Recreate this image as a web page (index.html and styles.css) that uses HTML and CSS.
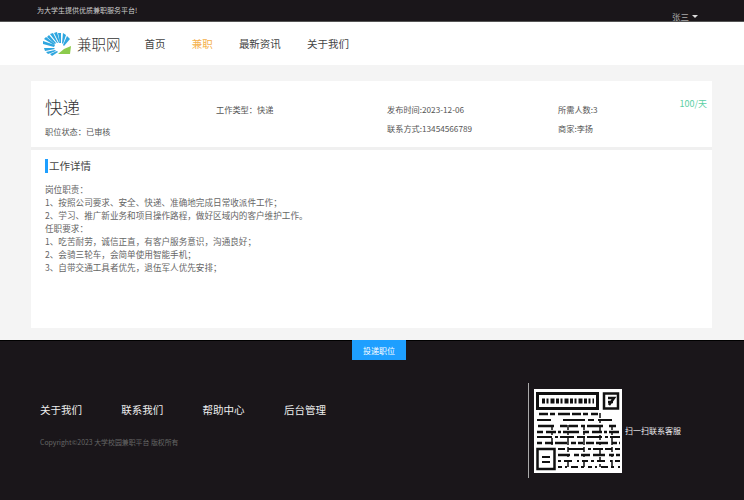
FILE: index.html
```html
<!DOCTYPE html>
<html lang="zh-CN">
<head>
  <meta charset="UTF-8">
  <meta name="viewport" content="width=device-width, initial-scale=1.0">
  <title>职位详情</title>
  <link rel="stylesheet" href="styles.css">
</head>
<body>
  <div class="topbar">
    <span class="slogan">为大学生提供优质兼职服务平台!</span>
    <span class="user">张三<i class="caret"></i></span>
  </div>
  <header class="nav">
    <svg class="logo-icon" width="28" height="24" viewBox="0 0 28 24">
      <g fill="#2fa6df">
        <polygon points="12,13 0,9 0,12 11,15"/>
        <polygon points="11,16 1,16 2,19 12,17"/>
        <polygon points="12,18 3,20 5,22 13,19"/>
        <polygon points="14,19 7,22 9,24 15,20"/>
        <polygon points="12,12 3,5 1,7 11,13"/>
        <polygon points="13,11 6,3 4,5 12,12"/>
        <polygon points="15,11 10,1 7,2 14,11"/>
        <polygon points="17,11 14,0 11,1 16,11"/>
        <polygon points="18,11 18,1 15,1 17,11"/>
        <polygon points="20,12 23,3 20,1 19,11"/>
        <polygon points="21,14 27,7 24,4 20,13"/>
      </g>
      <polygon points="15,22 27,22 28,14 21,17" fill="#8ccb4c"/>
    </svg>
    <span class="logo-text">兼职网</span>
    <nav class="menu">
      <a>首页</a>
      <a class="active">兼职</a>
      <a>最新资讯</a>
      <a>关于我们</a>
    </nav>
  </header>
  <main class="main">
    <div class="card">
      <section class="job-head">
        <div class="col col-title">
          <h1>快递</h1>
          <p>职位状态：已审核</p>
        </div>
        <div class="col">
          <p>工作类型：快递</p>
        </div>
        <div class="col">
          <p>发布时间:2023-12-06</p>
          <p>联系方式:13454566789</p>
        </div>
        <div class="col col-last">
          <p>所需人数:3</p>
          <p>商家:李扬</p>
        </div>
        <div class="price">100/天</div>
      </section>
      <section class="job-detail">
        <h2>工作详情</h2>
        <div class="detail-text">
          <p>岗位职责：</p>
          <p>1、按照公司要求、安全、快递、准确地完成日常收派件工作；</p>
          <p>2、学习、推广新业务和项目操作路程，做好区域内的客户维护工作。</p>
          <p>任职要求：</p>
          <p>1、吃苦耐劳，诚信正直，有客户服务意识，沟通良好；</p>
          <p>2、会骑三轮车，会简单使用智能手机；</p>
          <p>3、自带交通工具者优先，退伍军人优先安排；</p>
        </div>
      </section>
    </div>
  </main>
  <footer class="footer">
    <button class="apply">投递职位</button>
    <div class="footer-body">
      <div class="footer-left">
        <div class="footer-links">
          <a>关于我们</a>
          <a>联系我们</a>
          <a>帮助中心</a>
          <a>后台管理</a>
        </div>
        <p class="copyright">Copyright©2023 大学校园兼职平台 版权所有</p>
      </div>
      <div class="footer-right">
        <svg class="qr" width="88" height="84" viewBox="0 0 88 84">
          <rect width="88" height="84" fill="#fff"/>
          <g fill="none" stroke="#111">
            <rect x="3.500" y="4.500" width="60" height="15" stroke-width="3"/>
            <rect x="70" y="4.500" width="14" height="15" stroke-width="2.500"/>
            <rect x="3.500" y="60" width="17" height="20" stroke-width="2.500"/>
            <path stroke-width="5" stroke-dasharray="3 1.500 2 2 4 1.500" d="M8 12 H60"/>
            <path stroke-width="2.500" d="M74 9 H80 L75 16 M74 13 H79"/>
            <path stroke-width="2" d="M8 68 H16 M8 73 H16"/>
            <path stroke-width="2.500" stroke-dasharray="9 2 5 3 12 2" d="M5 25 H64"/>
            <path stroke-width="2" stroke-dasharray="14 12 22 3 6 4" d="M3 31 H84"/>
            <path stroke-width="2.500" stroke-dasharray="16 6 7 2 9 3 4 2" d="M4 37 H84"/>
            <path stroke-width="2.500" stroke-dasharray="6 3 10 2 3 2 16 4" d="M3 43 H85"/>
            <path stroke-width="2" stroke-dasharray="15 3 3 2 14 3 8 2" d="M3 48 H86"/>
            <path stroke-width="2.500" stroke-dasharray="5 3 8 2 12 4 5 2" d="M3 54 H86"/>
            <path stroke-width="2" stroke-dasharray="7 3 16 4 3 2 10 2" d="M24 60 H86"/>
            <path stroke-width="2.500" stroke-dasharray="12 4 5 2 9 3" d="M24 66 H86"/>
            <path stroke-width="2" stroke-dasharray="3 3 8 5 2 3 6 3" d="M24 72 H86"/>
            <path stroke-width="2" stroke-dasharray="4 3 2 4 7 3 3 4" d="M24 78 H86"/>
            <path stroke-width="1.500" stroke-dasharray="5 2 3 3 7 2" d="M18 36 V58 M34 36 V80 M50 36 V80 M66 24 V80 M78 36 V80"/>
          </g>
        </svg>
        <span class="qr-text">扫一扫联系客服</span>
      </div>
    </div>
  </footer>
</body>
</html>
```

FILE: styles.css
```css
* {
  margin: 0;
  padding: 0;
  box-sizing: border-box;
}
body {
  font-family: "Noto Sans CJK SC", "Noto Sans", sans-serif;
  background-color: #f4f4f4;
  color: #555;
}
.topbar {
  height: 22px;
  background-color: #1a161a;
  border-bottom: 1px solid #555;
  padding: 0 46px 0 37px;
  display: flex;
  justify-content: space-between;
  color: #ccc;
}
.slogan {
  font-size: 7px;
  line-height: 21px;
}
.user {
  font-size: 8.5px;
  line-height: 12px;
  padding-top: 10px;
  color: #aaa;
}
.caret {
  display: inline-block;
  margin-left: 3px;
  vertical-align: 2px;
  border: 3px solid transparent;
  border-top: 3px solid #ddd;
  border-bottom: 0;
}
.nav {
  height: 43px;
  background-color: #fff;
  display: flex;
  align-items: center;
  padding-left: 43px;
}
.logo-icon {
  flex-shrink: 0;
}
.logo-text {
  font-size: 14.5px;
  font-weight: 300;
  color: #333;
  margin-left: 6px;
}
.menu {
  display: flex;
  gap: 26.2px;
  margin-left: 24px;
  font-size: 10.5px;
  color: #444;
}
.menu .active {
  color: #f5b04c;
}
.main {
  height: 275px;
  padding: 16px 32px 12px 31px;
}
.card {
  height: 247px;
  background-color: #fff;
}
.job-head {
  height: 69px;
  padding: 13px 0 0 14px;
  display: flex;
  position: relative;
  border-bottom: 3px solid #f0f0f0;
  font-size: 8.2px;
}
.col {
  width: 171px;
  display: flex;
  flex-direction: column;
  padding-top: 10px;
  gap: 8px;
  line-height: 11px;
}
.col-title {
  padding-top: 0;
  gap: 6px;
}
.col-last {
  width: 120px;
}
.job-head h1 {
  font-size: 17.5px;
  font-weight: 300;
  line-height: 26px;
  color: #333;
}
.price {
  position: absolute;
  right: 5px;
  top: 16px;
  font-size: 9px;
  color: #5ccfa5;
}
.job-detail {
  padding: 9px 14px 0;
}
.job-detail h2 {
  font-size: 10.5px;
  font-weight: 400;
  color: #444;
  line-height: 14px;
  padding-left: 1px;
  border-left: 3px solid #1e9fff;
}
.detail-text {
  margin-top: 10px;
  font-size: 8.6px;
  line-height: 13px;
  color: #666;
}
.footer {
  height: 160px;
  background-color: #1a161a;
  border-top: 1px solid #000;
}
.apply {
  display: block;
  width: 54px;
  height: 20px;
  margin: -1px 0 0 352px;
  border: none;
  background-color: #1e9fff;
  color: #fff;
  font-family: inherit;
  font-size: 8px;
}
.footer-body {
  display: flex;
  padding: 23px 0 0 40px;
}
.footer-left {
  width: 488px;
  padding-top: 19px;
}
.footer-links {
  display: flex;
  gap: 39.3px;
  color: #eee;
  font-size: 10.5px;
  line-height: 16px;
}
.copyright {
  margin-top: 19px;
  font-size: 6.9px;
  color: #666;
}
.footer-right {
  display: flex;
  align-items: center;
  height: 95px;
  border-left: 1px solid #aaa;
  padding-left: 5px;
}
.qr {
  flex-shrink: 0;
  filter: blur(0.5px);
}
.qr-text {
  margin-left: 3px;
  font-size: 8px;
  color: #eee;
}
```
